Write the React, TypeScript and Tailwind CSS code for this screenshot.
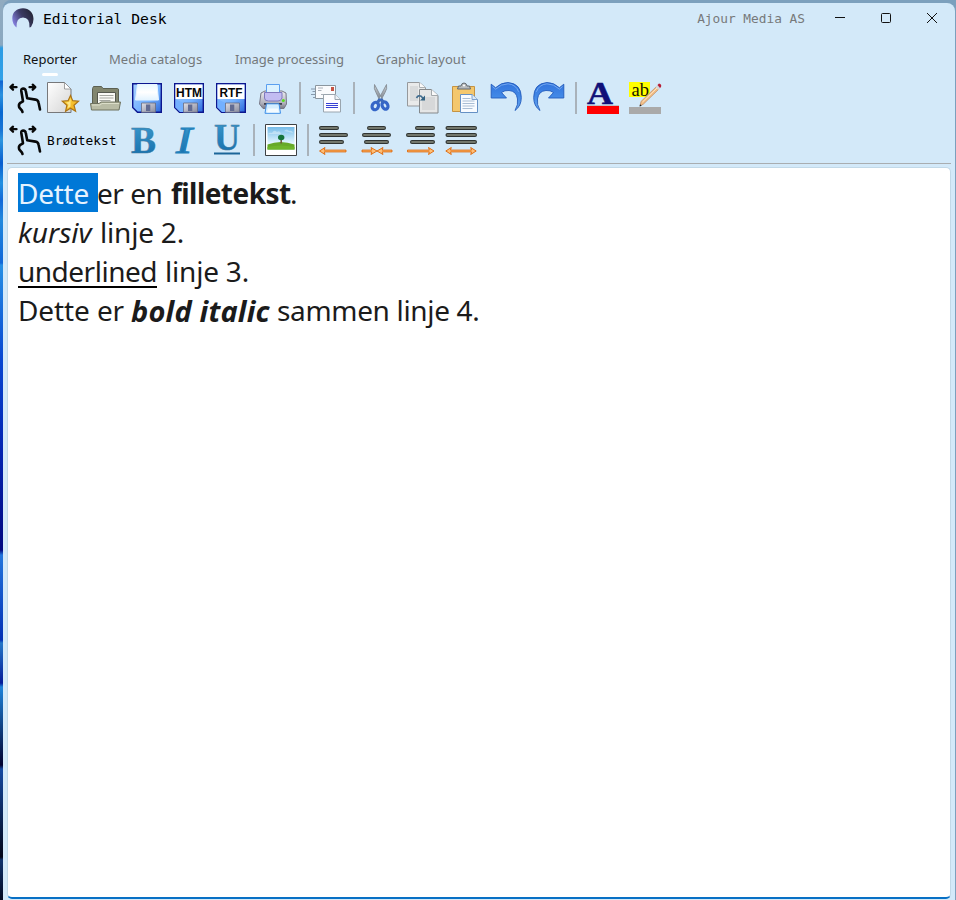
import React from "react";

const mono = "font-['DejaVu_Sans_Mono',monospace]";
const sans = "font-['Noto_Sans',sans-serif]";

type IconProps = { x: number; y: number; w?: number; className?: string; children: React.ReactNode };

/* Each drawing shares the toolbar's coordinate system; x and y pick its window. */
function Icon({ x, y, w = 32, className = "", children }: IconProps) {
  return (
    <svg width={w} height={32} viewBox={`${x} ${y} ${w} 32`} className={`block shrink-0 overflow-visible ${className}`}>
      {children}
    </svg>
  );
}

function Separator({ className = "" }: { className?: string }) {
  return <div className={`h-8 w-[2px] shrink-0 bg-[#a9b2ba] ${className}`} />;
}

function Hand() {
  return (
    <Icon x={8} y={82} w={36} className="w-9">
      <g fill="none" stroke="#080808" strokeWidth="2.600" strokeLinecap="round" strokeLinejoin="round">
        <path d="M22.500 112 L21.800 110.300 L19.200 107.300 Q18.300 104.500 20.300 102.800 L23 101.300 L21.300 91 Q21 88.800 23 88.600 Q25.400 88.500 25.800 91 L27.200 98.300 L35.500 99.600 Q38.200 100.200 38.600 102.800 L40 109.500" />
        <path d="M11 87.200h5.500M29.500 87.200h5M13 84.700l-2.600 2.500 2.600 2.500M32.700 84.700l2.600 2.500-2.600 2.500" strokeWidth="2.300" />
      </g>
    </Icon>
  );
}

function NewDoc() {
  return (
    <Icon x={47} y={82}>
      <path d="M47.5 82.500h17l6.500 6.500v23.500h-23.500z" fill="url(#paper)" stroke="#77787a" />
      <path d="M64.500 82.500v6.500h6.500z" fill="#fff" stroke="#8c8c8c" strokeWidth=".8" />
      <path d="M70.500 95.500l2.200 5.200 5.800.5-4.500 4 1.600 6-5.100-3-4.900 3 1.300-6-4.500-4 5.700-.5z" fill="url(#gold)" stroke="#ad7414" strokeWidth="1.200" />
      <path d="M70.500 98.500v8l-3 1.700 1-3.800-2.300-2 3-.3z" fill="#fff0a0" opacity=".8" />
    </Icon>
  );
}

function OpenFolder() {
  return (
    <Icon x={90} y={82}>
      <path d="M92.500 104V88.500l1-2h8l1.500 2h14.500q1 0 1 1.500V104z" fill="#82866f" stroke="#5c6052" />
      <path d="M97.500 92.500h18v13h-18z" fill="#fafaf5" stroke="#55584e" />
      <path d="M99.500 95.500h14M99.500 98h14M99.500 100.500h11" stroke="#a5a7a0" />
      <path d="M90.500 103.500h8.500l2-1.500h19.500l-1.500 8h-27.500z" fill="#b9bca5" stroke="#6e725f" />
      <path d="M92 105h8l2-1.500h17" stroke="#dcdec9" fill="none" />
    </Icon>
  );
}

function Disk({ label }: { label?: string }) {
  return (
    <Icon x={0} y={82}>
      <path d="M1.700 83.700h28.600v28.600H6.500l-4.800-4.800z" fill="url(#disk)" stroke="#0c168f" strokeWidth="1.400" />
      {label ? (
        <>
          <path d="M2.500 84.500h27v14.500h-27z" fill="#fff" />
          <text x="16" y="97" textAnchor="middle" textLength={label === "HTM" ? 26 : 23} lengthAdjust="spacingAndGlyphs" fontSize="12.500" fontWeight="700" fontFamily="Liberation Sans, sans-serif" fill="#050505">{label}</text>
          <path d="M2.500 99v8.500l4.500 4.500h3.500v-9z" fill="#73b0ff" />
        </>
      ) : (
        <path d="M6.500 84.500h19.500l1.500 15.500h-23z" fill="url(#shine)" stroke="#e7f5ff" />
      )}
      <path d="M10.500 103h14v9.300h-14z" fill="url(#steel)" stroke="#666b82" strokeWidth=".8" />
      <path d="M15 104.500h4.300v6.500h-4.300z" fill="#626b91" />
    </Icon>
  );
}

function Printer() {
  return (
    <Icon x={257} y={82}>
      <path d="M261 93l4-2h17l4 2 .5 11-2.500 4.500h-21l-3.500-4.500z" fill="url(#printer)" stroke="#777786" />
      <path d="M266.500 84.500h13v11h-13z" fill="#dcf2ff" stroke="#5b9ff0" />
      <path d="M264.500 92.500h17.500v5.500q-1 3-4 3h-9.500q-4 0-4-3z" fill="#c2bcf2" stroke="#8079bd" />
      <path d="M264 103h18v1.800h-18z" fill="#3d3f50" />
      <path d="M266.500 103.800h12.500l1.500 9.500h-15.500z" fill="#d4eeff" stroke="#3f8fe8" />
      <path d="M268 108.500h10l1 4h-12z" fill="#f4fbff" />
      <circle cx="283.300" cy="100.500" r="1.500" fill="#58de1d" />
    </Icon>
  );
}

function Mail() {
  return (
    <Icon x={311} y={82}>
      <path d="M311 89h4M312.500 91.500h3M311 94.500h4M313 97.500h3" stroke="#7d8fa3" strokeWidth=".9" />
      <path d="M315.500 85.500h20v13h-20z" fill="#fafbfd" stroke="#8b969f" />
      <path d="M331 87h3v4h-3z" fill="#c65343" />
      <path d="M318 88h5M318 90.500h3.500M321 94.500h6" stroke="#aab0b9" />
      <path d="M323.500 94.500h11.500l5.500 5v12.500h-17z" fill="#fdfdff" stroke="#9aa5ae" />
      <path d="M335 94.500v5h5.500" fill="#eef2f8" stroke="#9ba5ae" />
      <path d="M326 104l1-1 1 1 1-1 1 1 1-1 1 1 1-1 1 1 1-1 1 1 1-1 1 1M326 106l1-1 1 1 1-1 1 1 1-1 1 1 1-1 1 1 1-1 1 1 1-1 1 1M326 107.500h12" fill="none" stroke="#202bd0" strokeWidth=".9" />
    </Icon>
  );
}

function Cut() {
  return (
    <Icon x={365} y={82}>
      <path d="M374.500 84.500q-1 4 1.500 8l4 8.500 2.500-1.500zM386.500 84.500q1 4-1.500 8l-4.500 8.500-2-1.500z" fill="url(#blade)" stroke="#858c94" strokeWidth=".9" />
      <g fill="none" stroke="#3566c8" strokeWidth="3.200">
        <ellipse cx="375.300" cy="106" rx="3.100" ry="3.800" transform="rotate(25 375.300 106)" />
        <ellipse cx="385" cy="105.500" rx="2.800" ry="3.800" transform="rotate(-25 385 105.500)" />
      </g>
      <path d="M376 102l2.500-3.500h4l2.500 3.500-3 1-1.500-2-1.500 2z" fill="#3b69bd" />
    </Icon>
  );
}

function Copy() {
  return (
    <Icon x={407} y={82}>
      <path d="M407.500 82.500h12l6 5v18.500h-18z" fill="#e9eaea" stroke="#96999c" />
      <path d="M410 86h8v15h-8z" fill="#cfd1d2" opacity=".6" />
      <path d="M419.500 82.500v5h6" fill="#fafafa" stroke="#acb0b3" />
      <path d="M419.500 89.500h12l6.500 6v17.500h-18.500z" fill="#e5e6e6" stroke="#85898c" />
      <path d="M422 97h13v13h-13z" fill="#cfd1d2" opacity=".65" />
      <path d="M431.500 89.500v6h6.500" fill="#fafafa" stroke="#a4a8ab" />
      <path d="M416.500 98q2-3.500 5-1.500l1.500 2" fill="none" stroke="#426e90" strokeWidth="1.600" />
      <path d="M425 95.500v5h-5z" fill="#356483" />
    </Icon>
  );
}

function Paste() {
  return (
    <Icon x={449} y={82}>
      <path d="M452.500 86.500h22v25h-22z" fill="#f4c76d" stroke="#c59343" />
      <path d="M457.500 89l1-3h2.500q.5-3 3-3t3 3h2.500l1 3z" fill="#b6babd" stroke="#62696f" />
      <circle cx="464" cy="85.500" r="1" fill="#fff" />
      <path d="M460.500 94.500h11.500l5.500 5v13h-17z" fill="#f8fbff" stroke="#6590c4" />
      <path d="M472 94.500v5h5.500" fill="#d9e9fa" stroke="#7da2ce" />
      <path d="M462.500 98.500h8M462.500 101h12M462.500 103.500h12M462.500 106h12M462.500 108.500h10" stroke="#a9bdd4" />
    </Icon>
  );
}

function Undo({ redo = false }: { redo?: boolean }) {
  return (
    <Icon x={491} y={82} className={redo ? "-translate-x-px -scale-x-100" : ""}>
      <path d="M491.200 84.200l4.400 3.500q5.400-5.200 12.400-5.200 13.300 1.100 13.300 15 0 8.500-6.300 13 3.500-6 2.500-11.500-1-8-8.500-8.500-4.300-.4-7.500 2l5 5.500H491.200z" fill="url(#blueArrow)" stroke="#235bbc" strokeWidth=".9" />
      <path d="M492.400 86.500l3.200 2.700q5.500-5.400 12.500-5.400 8 .8 10.500 8" fill="none" stroke="#82b3f4" strokeWidth=".8" />
    </Icon>
  );
}

function FontColor() {
  return (
    <Icon x={587} y={82}>
      <text x="587" y="103.500" textLength="26" lengthAdjust="spacingAndGlyphs" fontFamily="Liberation Serif, serif" fontWeight="700" fontSize="31" fill="#101078" stroke="#101078" strokeWidth=".5">A</text>
      <path d="M587 105h32v1h-32z" fill="#bdc2c9" />
      <path d="M587 106h32v8h-32z" fill="#ff0000" />
    </Icon>
  );
}

function Highlight() {
  return (
    <Icon x={629} y={82}>
      <path d="M629 82h21v15h-21z" fill="#ffff00" />
      <text x="631.500" y="95.500" textLength="17.500" lengthAdjust="spacingAndGlyphs" fontFamily="Liberation Serif, serif" fontSize="18" fill="#151500">ab</text>
      <path d="M629 107h32v7h-32z" fill="#aaa" />
      <path d="M640 106l1-4.500 16-15.500 2.500 2.500-16 15.500z" fill="#f1bd85" stroke="#b98a66" strokeWidth=".7" />
      <path d="M642.500 102l14.500-14" stroke="#ffe6c6" strokeWidth="1" />
      <path d="M655.500 87l2-2 3 3-2 2z" fill="#d2d8dc" />
      <path d="M657.500 85l1.500-1.500q3 .500 2 3.500l-1 1z" fill="#b71d35" />
      <path d="M639.500 106.500l.6-2.300 1.600 1.500z" fill="#222" />
    </Icon>
  );
}

function Letter({ x, kind }: { x: number; kind: "B" | "I" | "U" }) {
  return (
    <Icon x={x} y={124}>
      <text x={x + (kind === "B" ? 4 : kind === "I" ? 7 : 3)} y={kind === "U" ? 149.500 : 152.500} textLength={kind === "B" ? 25 : kind === "I" ? 16 : 26} lengthAdjust="spacingAndGlyphs" fontFamily="Liberation Serif, serif" fontWeight={kind === "I" ? "400" : "700"} fontStyle={kind === "I" ? "italic" : "normal"} fontSize={38} fill="url(#letterBlue)" stroke={kind === "I" ? "#2381bb" : "#44799c"} strokeWidth={kind === "I" ? 1.2 : 0.5}>{kind}</text>
      {kind === "U" && <path d="M214 152.500h26v2h-26z" fill="#1b6599" />}
    </Icon>
  );
}

function Picture() {
  return (
    <Icon x={265} y={124}>
      <path d="M265.500 124.500h31v31h-31z" fill="#fff" stroke="#3d4144" />
      <path d="M267.500 127h27v23h-27z" fill="url(#sky)" />
      <path d="M268 134q2-2 4-1 2-4 5-1 3-2 4 2zM284 131q3-3 5 0 3-1 4 2z" fill="#fff" opacity=".35" />
      <path d="M267.500 144.500q13-5 27 0v5h-27z" fill="#67a928" />
      <path d="M267.500 147q13-3 27 0v2.500h-27z" fill="#6fb52b" />
      <path d="M281.200 138v5.500" stroke="#725737" strokeWidth="1.500" />
      <ellipse cx="281.200" cy="137.500" rx="3.200" ry="2.700" fill="#15733b" />
    </Icon>
  );
}

type Align = "left" | "center" | "right" | "justify";
const alignRows: Record<Align, number[][]> = {
  left: [[3, 19], [3, 28], [3, 24]],
  center: [[8, 23], [3, 28], [5, 26]],
  right: [[12, 28], [3, 28], [7, 28]],
  justify: [[2.5, 30], [2.5, 30], [2.5, 30]],
};

function Alignment({ kind }: { kind: Align }) {
  const arrows: Record<Align, string> = {
    left: "M1.500 27l5.500-3.500-.8 2.600H28v1.800H6.200l.8 2.600z",
    center: "M1 26.100h9.800l-.8-2.600 6 3.500-6 3.500.8-2.600H1zM31 26.100h-9.800l.8-2.600-6 3.500 6 3.500-.8-2.600h9.800z",
    right: "M29 27l-5.500-3.500.8 2.600H2.500v1.800h21.800l-.8 2.600z",
    justify: "M.8 27l5.500-3.500-.8 2.600h21l-.8-2.600 5.500 3.500-5.500 3.500.8-2.600h-21l.8 2.600z",
  };
  return (
    <Icon x={0} y={0}>
      {alignRows[kind].map(([a, b], i) => (
        <g key={i}>
          <path d={`M${a} ${4 + i * 7}H${b}`} stroke="#303432" strokeWidth="4" strokeLinecap="round" />
          <path d={`M${a} ${4 + i * 7}H${b}`} stroke="#73776c" strokeWidth="1.800" strokeLinecap="round" />
        </g>
      ))}
      <path d={arrows[kind]} fill="#ffc078" stroke="#dc6508" strokeWidth=".9" />
    </Icon>
  );
}

function Gradients() {
  return (
    <svg width="0" height="0" className="absolute">
      <defs>
        <linearGradient id="paper" x1="0" y1="0" x2="1" y2="1"><stop stopColor="#fff" /><stop offset="1" stopColor="#d5d5d5" /></linearGradient>
        <linearGradient id="gold" x1="0" y1="0" x2="1" y2="1"><stop stopColor="#ffe14c" /><stop offset="1" stopColor="#eea412" /></linearGradient>
        <linearGradient id="disk" x1="0" y1="0" x2="1" y2="1"><stop stopColor="#a9d2ff" /><stop offset=".6" stopColor="#72b0ff" /><stop offset="1" stopColor="#2863d7" /></linearGradient>
        <linearGradient id="shine" x1="0" y1="0" x2="0" y2="1"><stop stopColor="#e8f8ff" /><stop offset=".5" stopColor="#fff" /><stop offset="1" stopColor="#e2f3ff" /></linearGradient>
        <linearGradient id="steel" x1="0" y1="0" x2="1" y2="1"><stop stopColor="#e0e0e7" /><stop offset="1" stopColor="#898b9d" /></linearGradient>
        <linearGradient id="printer" x1="0" y1="0" x2="0" y2="1"><stop stopColor="#eeeef3" /><stop offset=".7" stopColor="#b0b0bb" /><stop offset="1" stopColor="#777784" /></linearGradient>
        <linearGradient id="blade" x1="0" y1="0" x2="0" y2="1"><stop stopColor="#cfd3d7" /><stop offset="1" stopColor="#727b86" /></linearGradient>
        <linearGradient id="blueArrow" x1="0" y1="0" x2="0" y2="1"><stop stopColor="#3273dc" /><stop offset=".5" stopColor="#4289e7" /><stop offset="1" stopColor="#6da9ee" /></linearGradient>
        <linearGradient id="letterBlue" x1="0" y1="0" x2="0" y2="1"><stop stopColor="#3f9ed2" /><stop offset="1" stopColor="#126ba9" /></linearGradient>
        <linearGradient id="sky" x1="0" y1="0" x2="0" y2="1"><stop stopColor="#75bbe8" /><stop offset=".7" stopColor="#e3f6ff" /></linearGradient>
        <linearGradient id="moon" x1="0" y1=".7" x2="1" y2=".2"><stop stopColor="#8580e0" /><stop offset=".5" stopColor="#3b3a62" /><stop offset="1" stopColor="#222333" /></linearGradient>
      </defs>
    </svg>
  );
}

export default function App() {
  return (
    <div className="flex h-[900px] w-[956px] overflow-hidden bg-[linear-gradient(180deg,#91abc0_0px,#8aa8c0_45px,#2c9ce4_48px,#32a1e8_80px,#1265d1_81px,#2b92df_95px,#0868d0_112px,#1875d6_130px,#2d96df_140px,#075dcf_163px,#2090e0_183px,#1169d8_200px,#2189dd_220px,#1067d8_263px,#268fe4_265px,#0847d1_360px,#0325b2_450px,#020880_550px,#2376dc_555px,#0330b5_640px,#2578c7_643px,#041b99_683px,#1e83da_687px,#020230_765px,#154aa2_769px,#030618_857px,#10336d_860px,#010921_900px)] pl-[3px]">
      <Gradients />
      <div className="flex w-[953px] flex-col rounded-tl-lg bg-[#7ca0bd] pt-[3px] pr-px">
        <main className="flex h-[897px] flex-col rounded-t-lg bg-[#d3e9f9]">
          <header className="flex h-8 shrink-0 items-center pl-[9px]">
            <svg width="22" height="22" viewBox="0 0 22 22" className="mr-[9px] shrink-0">
              <path d="M4.500 19.500Q.3 16 .3 10.500C.3 4 5 .3 11 .3S21.500 4.500 21.500 11q0 4.500-2.500 8l-1.500.5q.5-10-6.500-10t-6.500 10z" fill="url(#moon)" />
            </svg>
            <span className={`${mono} text-[14.67px] whitespace-pre text-black`}>Editorial Desk</span>
            <span className={`${mono} ml-auto text-[12.8px] whitespace-pre text-[#77797b]`}>Ajour Media AS</span>
            <svg width="103" height="13" viewBox="835 12 103 13" className="mt-[-1px] mr-[17px] ml-[30px] shrink-0">
              <path d="M835 17.500h10M882.500 13.500h7q1 0 1 1v7q0 1-1 1h-7q-1 0-1-1v-7q0-1 1-1zM927 13l10 10M937 13l-10 10" fill="none" stroke="#111" />
            </svg>
          </header>
          <nav className={`${sans} flex h-[44px] shrink-0 items-start pt-[13px] pl-5 text-[13px] leading-[22px] text-[#74787b]`}>
            <div className="flex w-[86px] flex-col">
              <span className="whitespace-nowrap text-[#111]">Reporter</span>
              <span className="mt-[3px] ml-[19px] h-[3px] w-4 rounded bg-white" />
            </div>
            <span className="w-[126px] tracking-[0.08px] whitespace-nowrap">Media catalogs</span>
            <span className="w-[141px] whitespace-nowrap">Image processing</span>
            <span className="tracking-[0.07px] whitespace-nowrap">Graphic layout</span>
          </nav>
          <section className="mx-1 flex h-[85px] shrink-0 flex-col gap-[10px] border-b border-[#a9adb0] pt-[3px]">
            <div className="flex h-8 items-start pl-px">
              <Hand />
              <div className="ml-[3px] flex">
                <NewDoc />
                <div className="ml-[11px] flex gap-[10px]">
                  <OpenFolder />
                  <div className="-ml-px flex gap-[10px]"><Disk /><Disk label="HTM" /><Disk label="RTF" /><Printer /></div>
                </div>
              </div>
              <Separator className="mr-[10px] ml-[10px]" />
              <Mail />
              <Separator className="mr-[10px] ml-[10px]" />
              <div className="flex gap-[10px]"><Cut /><Copy /><Paste /><Undo /><Undo redo /></div>
              <Separator className="mr-[10px] ml-[10px]" />
              <div className="flex gap-[10px]"><FontColor /><Highlight /></div>
            </div>
            <div className="flex h-8 items-center pl-px">
              <Hand />
              <span className={`${mono} ml-[3px] w-[80px] pt-[2px] text-[12.8px] leading-5 whitespace-nowrap text-black`}>Brødtekst</span>
              <div className="flex gap-[10px]"><Letter x={127} kind="B" /><Letter x={169} kind="I" /><Letter x={211} kind="U" /></div>
              <Separator className="mr-[10px] ml-[10px]" />
              <Picture />
              <Separator className="mr-[9px] ml-[10px]" />
              <div className="flex"><Alignment kind="left" /><div className="ml-[11px]"><Alignment kind="center" /></div><div className="ml-[12px]"><Alignment kind="right" /></div><div className="ml-[8px]"><Alignment kind="justify" /></div></div>
            </div>
          </section>
          <article className={`${sans} mx-1 mt-[3px] h-[732px] shrink-0 overflow-hidden rounded-[5px] border border-b-2 border-[#c2d9e8] border-b-[#0870c5] bg-white pt-[5px] pl-[10px] text-[28px] leading-[41px] text-[#1b1b1b]`}>
            <p className="flex h-[39px] whitespace-pre"><span className="w-20 bg-[#0078d7] tracking-[-0.25px] text-[#e5f3ff]">Dette </span><span className="-ml-px w-[74px] tracking-[-0.5px]">er en </span><strong className="w-[120px] tracking-[-0.55px]">filletekst</strong><span className="-ml-px">.</span></p>
            <p className="flex h-[39px] whitespace-pre"><em className="w-[82px]">kursiv</em><span className="tracking-[-0.2px]">linje 2.</span></p>
            <p className="flex h-[39px] whitespace-pre"><span className="h-[37px] w-[139px] border-b-2 border-black leading-[41px] tracking-[-0.5px]">underlined</span><span className="ml-[8px] tracking-[-0.2px]">linje 3.</span></p>
            <p className="flex h-[39px] whitespace-pre"><span className="w-[113px] tracking-[-0.1px]">Dette er </span><strong className="w-[147px] text-[29px] tracking-[0.18px] italic">bold italic</strong><span className="-ml-px tracking-[-0.33px]">sammen linje 4.</span></p>
          </article>
        </main>
      </div>
    </div>
  );
}
